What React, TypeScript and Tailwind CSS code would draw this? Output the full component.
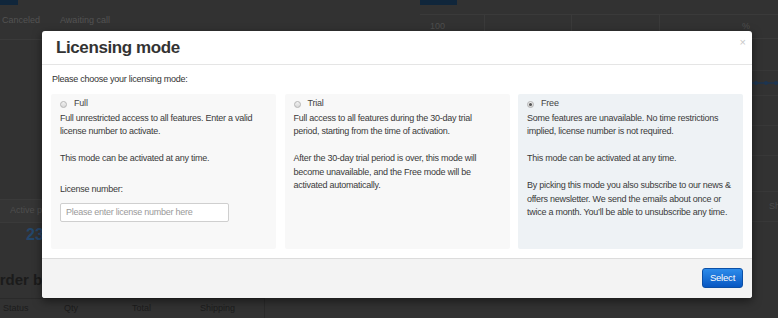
import React from "react";

const font = { fontFamily: '"Liberation Sans", Arial, sans-serif' };

function Radio({ checked }: { checked?: boolean }) {
  return (
    <span className="w-[7px] h-[7px] rounded-full border border-[#b4b4b4] bg-gradient-to-b from-[#f2f2f2] to-[#d8d8d8] flex items-center justify-center">
      {checked && <span className="w-[3px] h-[3px] rounded-full bg-[#555]" />}
    </span>
  );
}

function Panel({
  title,
  checked,
  tinted,
  children,
}: {
  title: string;
  checked?: boolean;
  tinted?: boolean;
  children: React.ReactNode;
}) {
  return (
    <div
      className={`h-[155px] rounded-[2px] pt-[4px] pl-[9px] pr-[6px] ${
        tinted ? "bg-[#eef2f5]" : "bg-[#f8f8f8]"
      }`}
    >
      <div className="h-[13px] flex items-center gap-[7px] mb-[1px]">
        <Radio checked={checked} />
        <span className="text-[9px] leading-[13.5px] tracking-[-0.2px] text-[#444]">{title}</span>
      </div>
      <div className="text-[9px] leading-[13.5px] tracking-[-0.25px] text-[#3a3a3a] whitespace-nowrap flex flex-col gap-[13.5px]">
        {children}
      </div>
    </div>
  );
}

export default function App() {
  return (
    <div className="relative w-[778px] h-[318px] overflow-hidden bg-[#323232]" style={font}>
      {/* dimmed background page */}
      <div className="flex w-full h-full">
        <div className="w-[420px] flex flex-col">
          <div className="h-[5px] w-[18px] bg-[#10263b]" />
          <div className="h-[35px] flex items-center gap-[20px] pl-[2px] pb-[2px] text-[9px] text-[#525252] border-b border-[#3a3a3a]">
            <span>Canceled</span>
            <span>Awaiting call</span>
          </div>
          <div className="h-[159px]" />
          <div className="h-[24px] flex items-center pl-[10px] text-[9px] text-[#4e4e4e] bg-[#353535] border-y border-[#3a3a3a]">
            Active products
          </div>
          <div className="h-[24px] flex items-center pl-[26px] text-[16px] font-bold text-[#24476b]">23</div>
          <div className="h-[21px]" />
          <div className="h-[24px] flex items-center ml-[-12px] text-[15px] font-bold text-[#1b1b1b]">Order by</div>
          <div className="h-[6px]" />
          <div className="h-[1px] bg-[#2a2a2a] w-[265px]" />
          <div className="flex-1 flex items-center text-[9px] text-[#1c1c1c] w-[265px] border-r border-[#2a2a2a]">
            <span className="w-[64px] pl-[3px]">Status</span>
            <span className="w-[68px]">Qty</span>
            <span className="w-[68px]">Total</span>
            <span>Shipping</span>
          </div>
        </div>
        <div className="flex-1 flex flex-col">
          <div className="h-[5px] w-[37px] bg-[#10263b]" />
          <div className="h-[10px] border-b border-[#3a3a3a]" />
          <div className="h-[24px] flex items-center text-[9px] text-[#4e4e4e] border-b border-[#3a3a3a]">
            <span className="w-[65px] pl-[10px] h-full flex items-center border-r border-[#3a3a3a]">100</span>
            <span className="w-[87px] h-full border-r border-[#3a3a3a]" />
            <span className="w-[88px] h-full border-r border-[#3a3a3a]" />
            <span className="flex-1 text-right pr-[28px]">%</span>
          </div>
          <div className="h-[32px] border-b border-[#383838]" />
          <div className="h-[25px] flex items-center justify-end border-b border-[#383838]">
            <svg width="30" height="6" viewBox="0 0 30 6">
              <line x1="0" y1="3" x2="30" y2="3" stroke="#1d3550" strokeWidth="1.5" />
              <circle cx="8" cy="3" r="2" fill="#1d3550" />
              <circle cx="18" cy="3" r="2" fill="#1d3550" />
              <circle cx="28" cy="3" r="2" fill="#1d3550" />
            </svg>
          </div>
          <div className="h-[30px] border-b border-[#383838]" />
          <div className="h-[30px] border-b border-[#383838]" />
          <div className="h-[36px] border-b border-[#383838]" />
          <div className="h-[30px] flex items-center justify-end text-[9px] text-[#4a4a4a] border-b border-[#383838]">
            <span className="mr-[-2px]">Sh</span>
          </div>
        </div>
      </div>

      {/* modal */}
      <div className="absolute left-[42px] top-[31px] w-[710px] bg-white rounded-[3px] shadow-[0_3px_10px_rgba(0,0,0,0.5)] overflow-hidden">
        <div className="h-[34px] flex items-center justify-between pl-[14px] pr-[6px] border-b border-[#e5e5e5]">
          <span className="text-[17px] font-bold tracking-[-0.4px] text-[#333]">Licensing mode</span>
          <span className="text-[11px] leading-none text-[#c8c8c8] self-start mt-[6px]">×</span>
        </div>
        <div className="px-[9px] pt-[8px] pb-[9px]">
          <div className="text-[9px] leading-[13.5px] tracking-[-0.25px] text-[#333] pl-[1px] mb-[7px]">
            Please choose your licensing mode:
          </div>
          <div className="grid grid-cols-3 gap-[8.5px]">
            <Panel title="Full">
              <p>
                Full unrestricted access to all features. Enter a valid
                <br />
                license number to activate.
              </p>
              <p>This mode can be activated at any time.</p>
              <div className="mt-[4px] flex flex-col gap-[6px]">
                <span>License number:</span>
                <input
                  className="w-[169px] h-[19px] border border-[#cfcfcf] rounded-[2px] bg-white pl-[5px] text-[9px] placeholder:text-[#9a9a9a] outline-none"
                  placeholder="Please enter license number here"
                  style={font}
                />
              </div>
            </Panel>
            <Panel title="Trial">
              <p>
                Full access to all features during the 30-day trial
                <br />
                period, starting from the time of activation.
              </p>
              <p>
                After the 30-day trial period is over, this mode will
                <br />
                become unavailable, and the Free mode will be
                <br />
                activated automatically.
              </p>
            </Panel>
            <Panel title="Free" checked tinted>
              <p>
                Some features are unavailable. No time restrictions
                <br />
                implied, license number is not required.
              </p>
              <p>This mode can be activated at any time.</p>
              <p>
                By picking this mode you also subscribe to our news &amp;
                <br />
                offers newsletter. We send the emails about once or
                <br />
                twice a month. You’ll be able to unsubscribe any time.
              </p>
            </Panel>
          </div>
        </div>
        <div className="h-[40px] bg-[#f3f3f3] border-t border-[#dcdcdc] flex items-center justify-end pr-[9px]">
          <button
            className="w-[41px] h-[20px] rounded-[3px] border border-[#0b4fa6] bg-gradient-to-b from-[#2d8ceb] to-[#0857c2] text-white text-[9.5px] tracking-[-0.2px]"
            style={font}
          >
            Select
          </button>
        </div>
      </div>
    </div>
  );
}
